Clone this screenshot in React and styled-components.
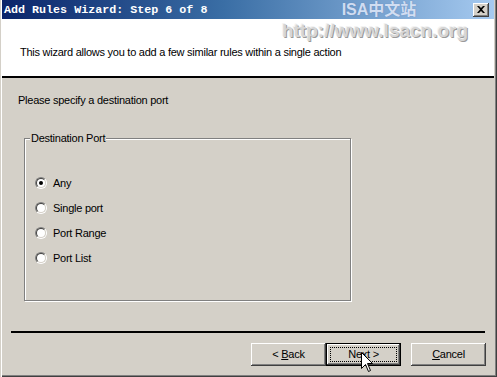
import React from "react";
import styled, { createGlobalStyle } from "styled-components";

const Global = createGlobalStyle`
  html, body { margin: 0; padding: 0; background: #d4d0c8; }
  body { font-family: "Liberation Sans", Arial, sans-serif; font-size: 11px; color: #000; letter-spacing: -0.25px; }
  * { box-sizing: border-box; }
`;

const Window = styled.div`
  position: relative;
  width: 497px;
  height: 377px;
  overflow: hidden;
  background: #d4d0c8;
  display: flex;
  flex-direction: column;
  padding: 0 3px 3px 2px;
  box-shadow: inset 1px 0 0 #d4d0c8, inset 2px 0 0 #ffffff,
    inset -1px -1px 0 #404040, inset -2px -2px 0 #808080, inset -3px -3px 0 #d4d0c8;
`;

const TitleBar = styled.div`
  height: 19px;
  display: flex;
  align-items: center;
  justify-content: space-between;
  padding: 0 5px 0 2px;
  background: linear-gradient(to right, #0a246a 0%, #3a6ea5 45%, #a6caf0 100%);
`;

const TitleText = styled.span`
  font-family: "Liberation Mono", "DejaVu Sans Mono", monospace;
  font-weight: bold;
  font-size: 11.7px;
  letter-spacing: 0;
  color: #ffffff;
  white-space: nowrap;
`;

const CloseButton = styled.div`
  width: 16px;
  height: 14px;
  background: #d4d0c8;
  box-shadow: inset -1px -1px 0 #404040, inset 1px 1px 0 #ffffff,
    inset -2px -2px 0 #808080;
  display: flex;
  align-items: center;
  justify-content: center;
`;

const Header = styled.div`
  position: relative;
  height: 59px;
  background: #ffffff;
  border-bottom: 2px solid #000000;
  padding: 27px 0 0 18px;
  line-height: 13px;
  white-space: nowrap;
`;

const Watermark = styled.div`
  position: absolute;
  top: -19px;
  left: 281px;
  width: 184px;
  display: flex;
  flex-direction: column;
  align-items: center;
  pointer-events: none;
  font-family: "Liberation Sans", "Noto Sans CJK SC", sans-serif;
  font-weight: bold;
  letter-spacing: 0;
`;

const WmTop = styled.span`
  font-size: 16px;
  line-height: 20px;
  color: rgba(230, 238, 252, 0.85);
  text-shadow: 0 0 1px rgba(80, 110, 170, 0.6);
  padding-left: 8px;
`;

const WmBottom = styled.span`
  font-size: 19px;
  line-height: 22px;
  color: #d6d6d6;
  text-shadow: 1px 1px 0 #9a9a9a, -1px -1px 0 #f2f2f2;
`;

const Body = styled.div`
  flex: 1;
  display: flex;
  flex-direction: column;
  padding: 16px 0 0 0;
`;

const Prompt = styled.div`
  line-height: 13px;
  padding-left: 16px;
`;

const Group = styled.fieldset`
  margin: 25px 0 0 22px;
  width: 327px;
  height: 169px;
  padding: 25px 0 0 10px;
  border: 1px solid #808080;
  box-shadow: 1px 1px 0 #ffffff, inset 1px 1px 0 #ffffff;
`;

const Legend = styled.legend`
  margin-left: -5px;
  padding: 0 1px;
  background: #d4d0c8;
  line-height: 13px;
`;

const RadioList = styled.div`
  display: flex;
  flex-direction: column;
`;

const RadioRow = styled.label`
  height: 25px;
  display: flex;
  align-items: center;
  gap: 6px;
`;

const RadioCircle = styled.span`
  position: relative;
  width: 12px;
  height: 12px;
  border-radius: 50%;
  border: 1px solid;
  border-color: #808080 #ffffff #ffffff #808080;
  flex: none;
  &::before {
    content: "";
    position: absolute;
    inset: 0;
    border-radius: 50%;
    border: 1px solid;
    border-color: #404040 #d4d0c8 #d4d0c8 #404040;
    background: #ffffff;
  }
  &::after {
    content: "";
    position: absolute;
    left: 3px;
    top: 3px;
    width: 4px;
    height: 4px;
    border-radius: 50%;
    background: #000;
    display: ${(p) => (p.$checked ? "block" : "none")};
  }
`;

const Separator = styled.div`
  margin: 30px 9px 0 9px;
  height: 2px;
  background: #000000;
`;

const ButtonRow = styled.div`
  display: flex;
  justify-content: flex-end;
  margin: 10px 8px 0 0;
`;

const Button = styled.div`
  position: relative;
  width: 75px;
  height: 23px;
  margin-left: ${(p) => p.$gap || 0}px;
  display: flex;
  align-items: center;
  justify-content: center;
  background: #d4d0c8;
  line-height: 13px;
  border: ${(p) => (p.$default ? "1px solid #000" : "none")};
  box-shadow: inset -1px -1px 0 #404040, inset 1px 1px 0 #ffffff,
    inset -2px -2px 0 #808080;
`;

const ButtonLabel = styled.span`
  white-space: pre;
`;

const FocusRect = styled.span`
  position: absolute;
  inset: 3px;
  border: 1px dotted #000;
`;

const Cursor = styled.svg`
  position: absolute;
  left: 361px;
  top: 352px;
`;

function Radio({ label, checked }) {
  return (
    <RadioRow>
      <RadioCircle $checked={checked} />
      <span>{label}</span>
    </RadioRow>
  );
}

export default function App() {
  return (
    <>
      <Global />
      <Window>
        <TitleBar>
          <TitleText>Add Rules Wizard: Step 6 of 8</TitleText>
          <CloseButton>
            <svg width="8" height="7" viewBox="0 0 8 7">
              <path d="M0 0h2l2 2 2-2h2L5 3.5 8 7H6L4 5 2 7H0l3-3.5z" fill="#000" />
            </svg>
          </CloseButton>
        </TitleBar>
        <Header>
          This wizard allows you to add a few similar rules within a single action
          <Watermark>
            <WmTop>ISA中文站</WmTop>
            <WmBottom>http://www.lsacn.org</WmBottom>
          </Watermark>
        </Header>
        <Body>
          <Prompt>Please specify a destination port</Prompt>
          <Group>
            <Legend>Destination Port</Legend>
            <RadioList>
              <Radio label="Any" checked />
              <Radio label="Single port" />
              <Radio label="Port Range" />
              <Radio label="Port List" />
            </RadioList>
          </Group>
          <Separator />
          <ButtonRow>
            <Button>
              <ButtonLabel>
                {"< "}
                <u>B</u>ack
              </ButtonLabel>
            </Button>
            <Button $default>
              <FocusRect />
              <ButtonLabel>
                Ne<u>x</u>t {">"}
              </ButtonLabel>
            </Button>
            <Button $gap={10}>
              <ButtonLabel>
                <u>C</u>ancel
              </ButtonLabel>
            </Button>
          </ButtonRow>
        </Body>
        <Cursor width="13" height="21" viewBox="0 0 13 21">
          <path
            d="M0.5 0.5 L0.5 16.5 L4.5 12.5 L7.5 19.5 L9.5 18.5 L6.5 11.5 L11.5 11.5 Z"
            fill="#fff"
            stroke="#000"
            strokeWidth="1"
          />
        </Cursor>
      </Window>
    </>
  );
}
